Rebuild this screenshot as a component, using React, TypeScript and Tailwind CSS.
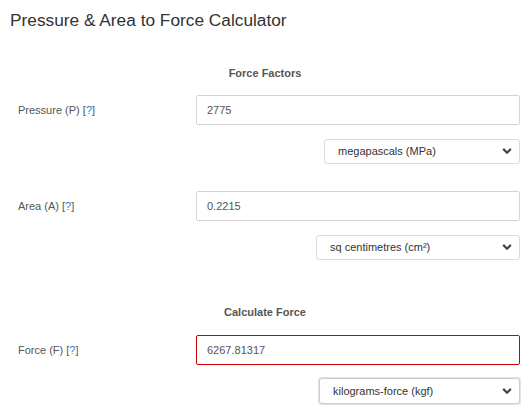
import React from 'react'

const font = { fontFamily: "'Liberation Sans', Arial, sans-serif" }

function Chevron() {
  return (
    <svg width="10" height="7" viewBox="0 0 10 7" className="pointer-events-none absolute right-[8px] top-1/2 -translate-y-1/2">
      <path d="M1.2 1.4 5 5.2 8.8 1.4" fill="none" stroke="#444" strokeWidth="2.2" />
    </svg>
  )
}

function Field({ label, value, error }: { label: string; value: string; error?: boolean }) {
  return (
    <div className="flex items-center">
      <label className="w-[178px] pt-[1px] text-[11px] text-[#555]">
        {label} <span>[</span><a className="text-[#2a7ae2]">?</a><span>]</span>
      </label>
      <input
        readOnly
        value={value}
        className={`h-[30px] flex-1 rounded-[2px] border bg-white pl-[10px] pr-[8px] text-[11px] text-[#555] outline-none ${error ? 'border-[#cc0000]' : 'border-[#d4d4d4]'}`}
      />
    </div>
  )
}

function Unit({ value, w, strong }: { value: string; w: string; strong?: boolean }) {
  return (
    <div className="mt-[13px] flex justify-end">
      <div className={`relative ${w}`}>
        <select
          value={value}
          onChange={() => {}}
          className={`w-full appearance-none rounded-[3px] border bg-white pl-[13px] text-[11px] text-[#333] outline-none ${strong ? 'h-[26px] border-[#cfcfcf] shadow-[0_0_0_1px_#e2e2e2]' : 'h-[25px] border-[#dcdcdc]'}`}
        >
          <option>{value}</option>
        </select>
        <Chevron />
      </div>
    </div>
  )
}

export default function App() {
  return (
    <div className="h-[416px] w-[532px] bg-white" style={font}>
      <h1 className="px-[10px] pt-[10px] text-[17.3px] leading-[20px] text-[#333]">Pressure &amp; Area to Force Calculator</h1>

      <div className="pl-[18px] pr-[12px]">
        <div className="mt-[36px] pr-[8px] text-center text-[11px] font-bold leading-[14px] text-[#555]">Force Factors</div>
        <div className="mt-[15px]">
          <Field label="Pressure (P)" value="2775" />
          <Unit value="megapascals (MPa)" w="w-[196px]" />
        </div>
        <div className="mt-[27px]">
          <Field label="Area (A)" value="0.2215" />
          <Unit value="sq centimetres (cm²)" w="w-[204px]" />
        </div>

        <div className="mt-[45px] pr-[8px] text-center text-[11px] font-bold leading-[14px] text-[#555]">Calculate Force</div>
        <div className="mt-[16px]">
          <Field label="Force (F)" value="6267.81317" error />
          <Unit value="kilograms-force (kgf)" w="w-[201px]" strong />
        </div>
      </div>
    </div>
  )
}
